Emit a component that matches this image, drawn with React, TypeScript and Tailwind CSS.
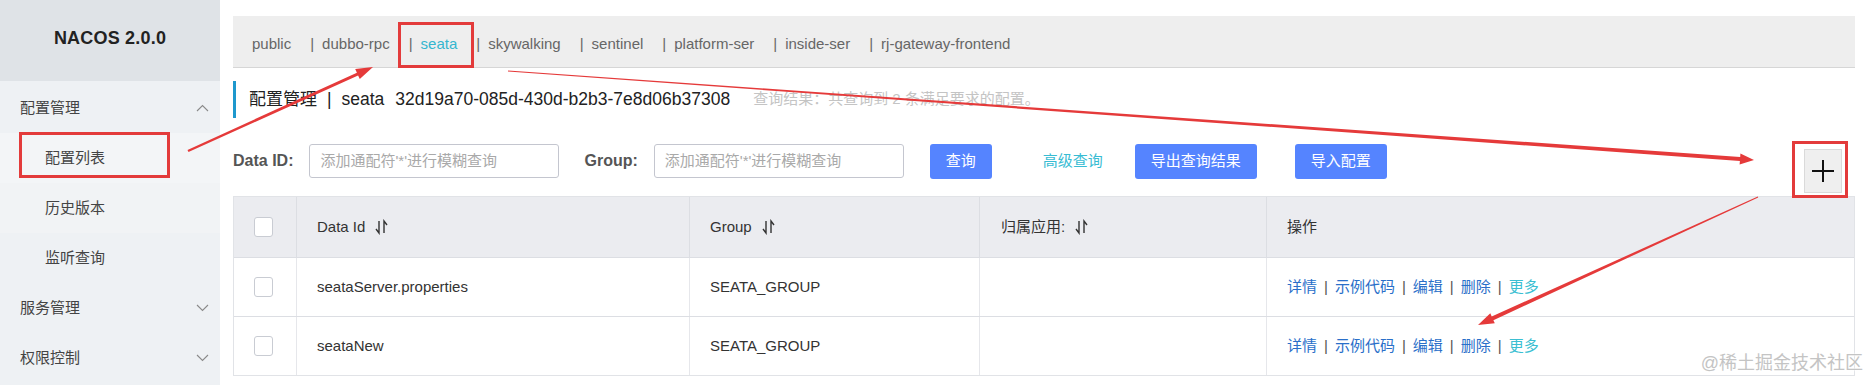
import React from "react";

// red annotation arrow: tapered shaft + filled head
function arrowPoints(
  x1: number,
  y1: number,
  x2: number,
  y2: number,
  w1: number,
  w2: number,
  hl: number,
  hw: number
) {
  const dx = x2 - x1;
  const dy = y2 - y1;
  const len = Math.hypot(dx, dy);
  const ux = dx / len;
  const uy = dy / len;
  const nx = -uy;
  const ny = ux;
  const bx = x2 - ux * hl;
  const by = y2 - uy * hl;
  const pts = [
    [x1 + (nx * w1) / 2, y1 + (ny * w1) / 2],
    [bx + (nx * w2) / 2, by + (ny * w2) / 2],
    [bx + (nx * hw) / 2, by + (ny * hw) / 2],
    [x2, y2],
    [bx - (nx * hw) / 2, by - (ny * hw) / 2],
    [bx - (nx * w2) / 2, by - (ny * w2) / 2],
    [x1 - (nx * w1) / 2, y1 - (ny * w1) / 2],
  ];
  return pts.map((p) => p[0].toFixed(1) + "," + p[1].toFixed(1)).join(" ");
}

function SortIcon() {
  return (
    <svg width="13" height="16" viewBox="0 0 13 16" className="inline-block ml-[10px]">
      <path d="M4 2 V14 L1 10" fill="none" stroke="#333" strokeWidth="1.4" />
      <path d="M9 14 V2 L12 6" fill="none" stroke="#333" strokeWidth="1.4" />
    </svg>
  );
}

function Chevron({ up }: { up?: boolean }) {
  return (
    <svg width="13" height="8" viewBox="0 0 13 8">
      {up ? (
        <path d="M1 7 L6.5 1.5 L12 7" fill="none" stroke="#8a8a8a" strokeWidth="1.1" />
      ) : (
        <path d="M1 1 L6.5 6.5 L12 1" fill="none" stroke="#8a8a8a" strokeWidth="1.1" />
      )}
    </svg>
  );
}

function Checkbox() {
  return <div className="w-[19px] h-[20px] rounded-[3px] border border-[#c9ccd3] bg-white" />;
}

const tabs = ["public", "dubbo-rpc", "seata", "skywalking", "sentinel", "platform-ser", "inside-ser", "rj-gateway-frontend"];

const rows = [
  { id: "seataServer.properties", group: "SEATA_GROUP" },
  { id: "seataNew", group: "SEATA_GROUP" },
];

function Ops() {
  const sep = <span className="mx-[7px] text-[#555]">|</span>;
  return (
    <div className="flex items-center text-[15px] text-[#2a6fc9]">
      <span>详情</span>
      {sep}
      <span>示例代码</span>
      {sep}
      <span>编辑</span>
      {sep}
      <span>删除</span>
      {sep}
      <span className="text-[#3cbfd2]">更多</span>
    </div>
  );
}

export default function App() {
  return (
    <div className="relative flex w-full h-[385px] overflow-hidden bg-white font-['Liberation_Sans','Noto_Sans_CJK_SC',sans-serif] text-[#333]">
      {/* sidebar */}
      <aside className="w-[220px] h-full shrink-0 bg-[#eef1f4]">
        <div className="h-[81px] bg-[#dfe3e7] flex items-center justify-center pb-[4px]">
          <span className="text-[18px] font-bold text-[#222] tracking-[0.2px]">NACOS 2.0.0</span>
        </div>
        <div className="pt-[2px]">
          <div className="h-[50px] flex items-center justify-between pl-[20px] pr-[11px] text-[15px] text-[#444]">
            配置管理
            <Chevron up />
          </div>
          <div className="relative h-[50px] flex items-center pl-[45px] text-[15px] text-[#444] bg-[#f3f5f7]">
            配置列表
            <div className="absolute left-[19px] top-[-1px] w-[151px] h-[46px] border-[3px] border-[#e33b3b]" />
          </div>
          <div className="h-[50px] flex items-center pl-[45px] text-[15px] text-[#444] bg-[#f1f3f5]">历史版本</div>
          <div className="h-[50px] flex items-center pl-[45px] text-[15px] text-[#444]">监听查询</div>
          <div className="h-[50px] flex items-center justify-between pl-[20px] pr-[11px] text-[15px] text-[#444]">
            服务管理
            <Chevron />
          </div>
          <div className="h-[50px] flex items-center justify-between pl-[20px] pr-[11px] text-[15px] text-[#444]">
            权限控制
            <Chevron />
          </div>
        </div>
      </aside>

      {/* main */}
      <main className="flex-1 pl-[13px] pr-[14px] pt-[16px]">
        <div className="h-[52px] bg-[#eeeeee] border-b border-[#d6d6d6] flex items-stretch pl-[19px] text-[15px] text-[#666]">
          {tabs.map((t, i) => (
            <div key={t} className="relative flex items-center pt-[5px]">
              {i > 0 && <span className="ml-[19px] mr-[8px]">|</span>}
              <span className={t === "seata" ? "text-[#35b6cf]" : ""}>{t}</span>
              {t === "seata" && (
                <div className="absolute top-[6px] bottom-[-1px] left-[8px] right-[-17px] border-[3px] border-[#e33b3b]" />
              )}
            </div>
          ))}
        </div>

        <div className="mt-[13px] h-[37px] flex items-center">
          <div className="w-[3px] h-full bg-[#1e98cd]" />
          <div className="ml-[13px] flex items-center text-[17.5px] text-[#222]">
            <span className="text-[17px]">配置管理</span>
            <span className="mx-[10px]">|</span>
            <span>seata</span>
            <span className="ml-[11px]">32d19a70-085d-430d-b2b3-7e8d06b37308</span>
            <span className="ml-[23px] text-[15px] text-[#c4c4c4]">查询结果：共查询到 2 条满足要求的配置。</span>
          </div>
        </div>

        <div className="mt-[26px] flex items-start">
          <span className="h-[34px] flex items-center text-[16px] font-bold text-[#555]">Data ID:</span>
          <div className="ml-[16px] w-[250px] h-[34px] border border-[#c4c6cf] rounded-[3px] flex items-center pl-[10px] text-[15px] text-[#a9a9a9]">
            添加通配符'*'进行模糊查询
          </div>
          <span className="ml-[25px] h-[34px] flex items-center text-[16px] font-bold text-[#555]">Group:</span>
          <div className="ml-[16px] w-[250px] h-[34px] border border-[#c4c6cf] rounded-[3px] flex items-center pl-[10px] text-[15px] text-[#a9a9a9]">
            添加通配符'*'进行模糊查询
          </div>
          <div className="ml-[26px] w-[62px] h-[35px] rounded-[3px] bg-[#5584ff] text-white text-[15px] flex items-center justify-center">
            查询
          </div>
          <span className="ml-[51px] h-[35px] flex items-center text-[15px] text-[#38bcd3]">高级查询</span>
          <div className="ml-[32px] w-[122px] h-[35px] rounded-[3px] bg-[#5584ff] text-white text-[15px] flex items-center justify-center">
            导出查询结果
          </div>
          <div className="ml-[38px] w-[92px] h-[35px] rounded-[3px] bg-[#5584ff] text-white text-[15px] flex items-center justify-center">
            导入配置
          </div>
          <div className="relative ml-auto mr-[13px] mt-[5px] w-[38px] h-[44px] bg-[#efefef] border border-[#dadada] flex items-center justify-center">
            <svg width="24" height="24" viewBox="0 0 24 24">
              <path d="M12 1 V23 M1 12 H23" stroke="#111" strokeWidth="2" />
            </svg>
            <div className="absolute left-[-13px] top-[-9px] w-[56px] h-[57px] border-[3px] border-[#e33b3b]" />
          </div>
        </div>

        <div className="mt-[3px] border border-[#e1e3e7]">
          <div className="grid grid-cols-[63px_393px_290px_287px_1fr] h-[60px] bg-[#ebecf0] text-[15px] text-[#333]">
            <div className="flex items-center pl-[20px] border-r border-[#dcdee3]">
              <Checkbox />
            </div>
            <div className="flex items-center pl-[20px] border-r border-[#dcdee3]">
              Data Id
              <SortIcon />
            </div>
            <div className="flex items-center pl-[20px] border-r border-[#dcdee3]">
              Group
              <SortIcon />
            </div>
            <div className="flex items-center pl-[21px] border-r border-[#dcdee3]">
              归属应用:
              <SortIcon />
            </div>
            <div className="flex items-center pl-[20px]">操作</div>
          </div>
          {rows.map((r) => (
            <div key={r.id} className="grid grid-cols-[63px_393px_290px_287px_1fr] h-[59px] border-t border-[#dcdee3] text-[15px] text-[#333]">
              <div className="flex items-center pl-[20px] border-r border-[#e6e7eb]">
                <Checkbox />
              </div>
              <div className="flex items-center pl-[20px] border-r border-[#e6e7eb]">{r.id}</div>
              <div className="flex items-center pl-[20px] border-r border-[#e6e7eb]">{r.group}</div>
              <div className="border-r border-[#e6e7eb]" />
              <div className="flex items-center pl-[20px]">
                <Ops />
              </div>
            </div>
          ))}
        </div>
      </main>

      {/* annotation arrows */}
      <svg className="absolute left-0 top-0 pointer-events-none" width="1869" height="385">
        <polygon points={arrowPoints(188, 151, 373, 67, 2.5, 3, 17, 11)} fill="#e53a3a" />
        <polygon points={arrowPoints(508, 71, 1754, 160, 1, 4, 14, 11)} fill="#e53a3a" />
        <polygon points={arrowPoints(1758, 197, 1478, 325, 0.8, 4, 16, 11)} fill="#e53a3a" />
      </svg>

      <div className="absolute right-[6px] bottom-[8px] text-[18px] text-[#c4c4c4] [text-shadow:0_0_2px_#fff,0_0_2px_#fff]">
        @稀土掘金技术社区
      </div>
    </div>
  );
}
